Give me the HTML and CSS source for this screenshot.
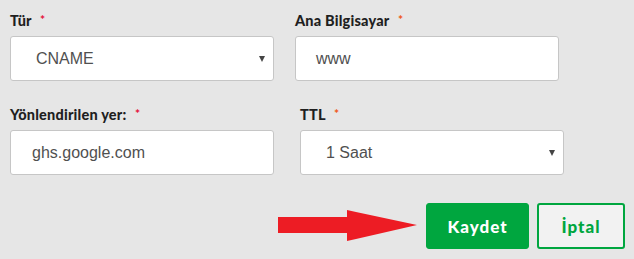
FILE: index.html
```html
<!DOCTYPE html>
<html lang="tr">
<head>
<meta charset="utf-8">
<link rel="stylesheet" href="styles.css">
</head>
<body>
<div class="form">
  <div class="row">
    <div class="field">
      <div class="label">Tür <span class="req req-red">*</span></div>
      <div class="box select"><span class="value">CNAME</span><span class="caret"></span></div>
    </div>
    <div class="field">
      <div class="label">Ana Bilgisayar <span class="req">*</span></div>
      <div class="box"><span class="value">www</span></div>
    </div>
  </div>
  <div class="row row-second">
    <div class="field">
      <div class="label">Yönlendirilen yer: <span class="req req-red">*</span></div>
      <div class="box box-narrow"><span class="value">ghs.google.com</span></div>
    </div>
    <div class="field">
      <div class="label">TTL <span class="req">*</span></div>
      <div class="box select"><span class="value">1 Saat</span><span class="caret"></span></div>
    </div>
  </div>
  <div class="actions">
    <svg class="arrow" width="140" height="32" viewBox="0 0 140 32">
      <polygon points="0,7 69,7 69,0 78,2 139,15 78,29 69,31 69,23 0,23" fill="#ed1c24"/>
    </svg>
    <button class="btn btn-primary">Kaydet</button>
    <button class="btn btn-secondary">İptal</button>
  </div>
</div>
</body>
</html>
```

FILE: styles.css
```css
html, body {
  margin: 0;
  padding: 0;
  background: #e6e6e6;
}
.form {
  width: 634px;
  height: 259px;
  box-sizing: border-box;
  padding: 11px 9px 0 10px;
}
.row {
  display: flex;
  gap: 21px;
}
.row-second {
  gap: 26px;
  margin-top: 24px;
}
.field {
  width: 264px;
}
.label {
  font-family: "Lato", "Liberation Sans", sans-serif;
  font-weight: 900;
  font-size: 14.5px;
  line-height: 18px;
  letter-spacing: 0.2px;
  color: #1f1f1f;
  margin-bottom: 6px;
  white-space: nowrap;
}
.req {
  color: #f05a22;
  margin-left: 5px;
  font-size: 12px;
  vertical-align: 2px;
}
.req-red {
  color: #e5173f;
}
.box {
  box-sizing: border-box;
  height: 45px;
  background: #fff;
  border: 1px solid #c6c6c6;
  border-radius: 3px;
  display: flex;
  align-items: center;
  justify-content: space-between;
  padding: 0 8px 0 20px;
  font-family: "Liberation Sans", Arial, sans-serif;
  font-size: 16px;
  color: #505050;
}
.select {
  padding-left: 25px;
}
.box-narrow {
  padding-left: 21px;
}
.caret {
  width: 0;
  height: 0;
  border-left: 3.5px solid transparent;
  border-right: 3.5px solid transparent;
  border-top: 6px solid #444;
  margin-top: 1px;
}
.actions {
  display: flex;
  justify-content: flex-end;
  align-items: center;
  gap: 8px;
  margin-top: 28px;
}
.arrow {
  display: block;
}
.btn {
  box-sizing: border-box;
  height: 46px;
  border-radius: 3px;
  font-family: "Lato", "Liberation Sans", sans-serif;
  font-weight: 900;
  font-size: 17px;
  letter-spacing: 1px;
  cursor: pointer;
}
.btn-primary {
  width: 103px;
  background: #00a63f;
  border: 1px solid #00a63f;
  color: #fff;
}
.btn-secondary {
  width: 88px;
  background: #f2f2f2;
  border: 2px solid #00a63f;
  color: #00a63f;
}
```
